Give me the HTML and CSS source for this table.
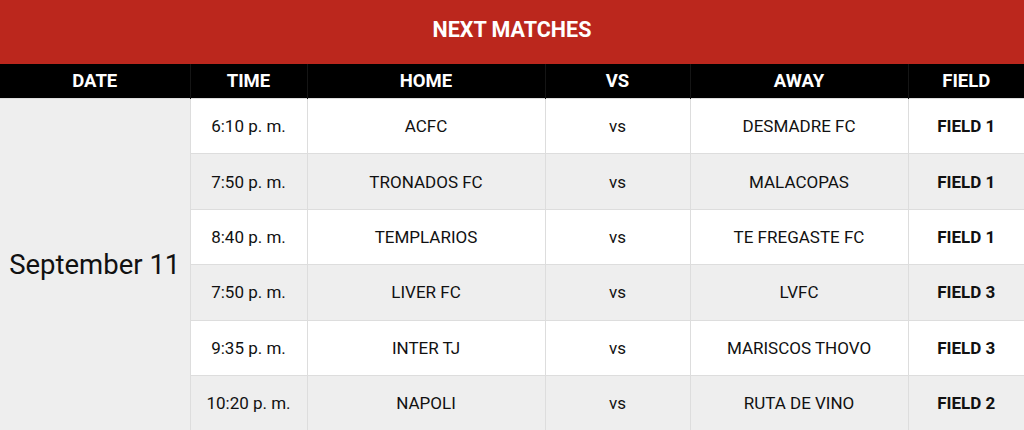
FILE: index.html
```html
<!DOCTYPE html>
<html>
<head>
<meta charset="utf-8">
<link rel="stylesheet" href="styles.css">
</head>
<body>
<div class="title">NEXT MATCHES</div>
<table class="matches">
  <colgroup>
    <col class="c-date"><col class="c-time"><col class="c-home"><col class="c-vs"><col class="c-away"><col class="c-field">
  </colgroup>
  <thead>
    <tr><th>DATE</th><th>TIME</th><th>HOME</th><th>VS</th><th>AWAY</th><th>FIELD</th></tr>
  </thead>
  <tbody>
    <tr><td class="date" rowspan="6">September 11</td><td>6:10 p. m.</td><td>ACFC</td><td>vs</td><td>DESMADRE FC</td><td class="field">FIELD 1</td></tr>
    <tr class="alt"><td>7:50 p. m.</td><td>TRONADOS FC</td><td>vs</td><td>MALACOPAS</td><td class="field">FIELD 1</td></tr>
    <tr><td>8:40 p. m.</td><td>TEMPLARIOS</td><td>vs</td><td>TE FREGASTE FC</td><td class="field">FIELD 1</td></tr>
    <tr class="alt"><td>7:50 p. m.</td><td>LIVER FC</td><td>vs</td><td>LVFC</td><td class="field">FIELD 3</td></tr>
    <tr><td>9:35 p. m.</td><td>INTER TJ</td><td>vs</td><td>MARISCOS THOVO</td><td class="field">FIELD 3</td></tr>
    <tr class="alt"><td>10:20 p. m.</td><td>NAPOLI</td><td>vs</td><td>RUTA DE VINO</td><td class="field">FIELD 2</td></tr>
  </tbody>
</table>
</body>
</html>
```
FILE: styles.css
```css
html, body {
  margin: 0;
  padding: 0;
  background: #ffffff;
}
body {
  font-family: Roboto, "Liberation Sans", sans-serif;
  color: #111111;
  width: 1024px;
  overflow: hidden;
}
.title {
  background: #bb271d;
  color: #ffffff;
  height: 64px;
  line-height: 60px;
  text-align: center;
  font-weight: 700;
  font-size: 21.5px;
}
.matches {
  width: 1024px;
  border-collapse: collapse;
  table-layout: fixed;
}
.c-date { width: 190px; }
.c-time { width: 117px; }
.c-home { width: 238px; }
.c-vs { width: 145px; }
.c-away { width: 218px; }
.c-field { width: 116px; }
.matches th {
  background: #000000;
  color: #ffffff;
  font-weight: 700;
  font-size: 18.5px;
  height: 34px;
  padding: 0;
  text-align: center;
  border-left: 1px solid #151515;
}
.matches th:first-child { border-left: none; }
.matches td {
  height: 54.4px;
  padding: 0;
  text-align: center;
  vertical-align: middle;
  font-size: 17px;
  border: 1px solid #dddddd;
  background: #ffffff;
}
.matches tr.alt td {
  background: #eeeeee;
}
.matches td.date {
  background: #eeeeee;
  font-size: 27.5px;
  border-left: none;
}
.matches td:last-child { border-right: none; }
.matches td.field {
  font-weight: 700;
}
```
